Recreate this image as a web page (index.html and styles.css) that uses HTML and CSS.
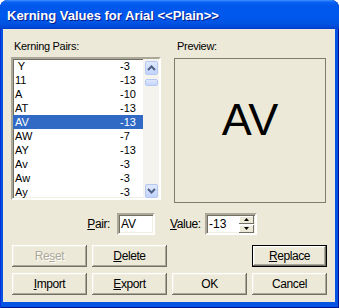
FILE: index.html
```html
<!DOCTYPE html>
<html lang="en">
<head>
    <meta charset="UTF-8">
    <title>Kerning Values for Arial</title>
    <link rel="stylesheet" href="styles.css">
</head>
<body>
    <div class="window">
        <div class="titlebar">
            <span class="title">Kerning Values for Arial &lt;&lt;Plain&gt;&gt;</span>
        </div>

        <div class="client">
            <div class="panes">
                <div class="pane pane-list">
                    <div class="label">Kerning Pairs:</div>
                    <div class="listbox">
                        <ul class="rows">
                            <li><span class="pair"> Y</span><span class="val">-3</span></li>
                            <li><span class="pair">11</span><span class="val">-13</span></li>
                            <li><span class="pair">A</span><span class="val">-10</span></li>
                            <li><span class="pair">AT</span><span class="val">-13</span></li>
                            <li class="selected"><span class="pair">AV</span><span class="val">-13</span></li>
                            <li><span class="pair">AW</span><span class="val">-7</span></li>
                            <li><span class="pair">AY</span><span class="val">-13</span></li>
                            <li><span class="pair">Av</span><span class="val">-3</span></li>
                            <li><span class="pair">Aw</span><span class="val">-3</span></li>
                            <li><span class="pair">Ay</span><span class="val">-3</span></li>
                        </ul>
                        <div class="scrollbar">
                            <div class="sb-btn">
                                <svg width="9" height="6" viewBox="0 0 9 6"><polyline points="1,5 4.5,1.5 8,5" fill="none" stroke="#4d6185" stroke-width="2"/></svg>
                            </div>
                            <div class="sb-thumb"></div>
                            <div class="sb-track"></div>
                            <div class="sb-btn">
                                <svg width="9" height="6" viewBox="0 0 9 6"><polyline points="1,1 4.5,4.5 8,1" fill="none" stroke="#4d6185" stroke-width="2"/></svg>
                            </div>
                        </div>
                    </div>
                </div>

                <div class="pane pane-preview">
                    <div class="label">Preview:</div>
                    <div class="preview"><span>AV</span></div>
                </div>
            </div>

            <div class="fields">
                <span class="field-label label-pair"><u>P</u>air:</span>
                <div class="textbox box-pair"><span>AV</span></div>
                <span class="field-label label-value"><u>V</u>alue:</span>
                <div class="textbox box-value">
                    <span>-13</span>
                    <div class="spin">
                        <div class="spin-btn"><svg width="5" height="3" viewBox="0 0 5 3"><polygon points="0,3 2.5,0 5,3" fill="#000"/></svg></div>
                        <div class="spin-btn"><svg width="5" height="3" viewBox="0 0 5 3"><polygon points="0,0 2.5,3 5,0" fill="#000"/></svg></div>
                    </div>
                </div>
            </div>

            <div class="buttons">
                <button class="btn" disabled>Re<u>s</u>et</button>
                <button class="btn"><u>D</u>elete</button>
                <span></span>
                <button class="btn btn-default"><u>R</u>eplace</button>
                <button class="btn"><u>I</u>mport</button>
                <button class="btn"><u>E</u>xport</button>
                <button class="btn">OK</button>
                <button class="btn">Cancel</button>
            </div>
        </div>
    </div>
</body>
</html>
```

FILE: styles.css
```css
body {
    margin: 0;
    padding: 0;
    background-color: #fff;
    font-family: "Liberation Sans", Arial, sans-serif;
    font-size: 11px;
}
.window {
    width: 339px;
    height: 308px;
    box-sizing: border-box;
    display: flex;
    flex-direction: column;
    background-color: #0553e2;
    border-radius: 8px 8px 0 0;
    padding: 0 4px 6px 3px;
    box-shadow: inset 1px 0 #0831d9, inset -1px 0 #00138c, inset 0 -1px #00138c;
}
.titlebar {
    height: 29px;
    margin: 0 -4px 0 -3px;
    border-radius: 8px 8px 0 0;
    background: linear-gradient(#3d95ff 0, #0a63f4 2px, #0057ea 6px, #0058ee 16px, #0054e3 23px, #0049d8 27px, #003cc8 29px);
    display: flex;
    align-items: center;
    padding-left: 7px;
}
.title {
    color: #fff;
    font-weight: bold;
    font-size: 13px;
    text-shadow: 1px 1px #0a1a8a;
    margin-top: 1px;
}
.client {
    flex: 1;
    background-color: #ece9d8;
    padding-top: 11px;
}

/* top panes */
.panes {
    display: flex;
    gap: 13px;
    padding-left: 8px;
    height: 163px;
}
.label {
    line-height: 13px;
    padding-left: 3px;
    color: #000;
    letter-spacing: -0.3px;
}
.listbox {
    margin-top: 4px;
    width: 150px;
    height: 143px;
    box-sizing: border-box;
    border: 2px solid;
    border-color: #aca899 #fff #fff #aca899;
    box-shadow: inset 1px 1px #716f64, inset -1px -1px #f1efe2;
    background: #fff;
    display: flex;
    overflow: hidden;
}
.rows {
    list-style: none;
    margin: 0;
    padding: 0;
    flex: 1;
}
.rows li {
    height: 14px;
    line-height: 14px;
    display: flex;
    padding-left: 2px;
}
.rows li.selected {
    background-color: #316ac5;
    color: #fff;
}
.pair {
    width: 105px;
    white-space: pre;
}
.scrollbar {
    width: 16px;
    background-color: #f4f3ee;
    display: flex;
    flex-direction: column;
    align-items: center;
    padding-top: 2px;
}
.sb-btn {
    width: 13px;
    height: 14px;
    box-sizing: border-box;
    border: 1px solid #b5c8f3;
    border-radius: 2px;
    background: linear-gradient(#dfe8fd, #c2d3fb);
    display: flex;
    align-items: center;
    justify-content: center;
}
.sb-thumb {
    width: 13px;
    height: 7px;
    box-sizing: border-box;
    margin-top: 4px;
    border: 1px solid #b5c8f3;
    border-radius: 2px;
    background: linear-gradient(#dfe8fd, #c6d5fb);
}
.sb-track {
    flex: 1;
}
.preview {
    margin-top: 5px;
    width: 152px;
    height: 145px;
    box-sizing: border-box;
    border: 1px solid #7f7c6e;
    text-align: center;
    padding-top: 35px;
    font-size: 45px;
    line-height: 52px;
    color: #000;
}

/* pair / value fields */
.fields {
    display: flex;
    align-items: center;
    margin-top: 10px;
    height: 22px;
}
.field-label {
    line-height: 13px;
    font-size: 12px;
    letter-spacing: -0.4px;
}
.label-pair {
    width: 107px;
    text-align: right;
}
.label-value {
    width: 28px;
    margin-left: 15px;
}
.textbox {
    margin-left: 7px;
    height: 22px;
    box-sizing: border-box;
    border: 2px solid;
    border-color: #aca899 #fff #fff #aca899;
    box-shadow: inset 1px 1px #716f64, inset -1px -1px #f1efe2;
    background: #fff;
    display: flex;
    align-items: center;
    padding-left: 2px;
    font-size: 12px;
}
.box-pair {
    width: 38px;
}
.box-value {
    width: 52px;
    justify-content: space-between;
    padding-right: 1px;
}
.spin {
    width: 15px;
    height: 17px;
    display: flex;
    flex-direction: column;
    gap: 1px;
}
.spin-btn {
    flex: 1;
    background: #ece9d8;
    box-shadow: inset -1px -1px #716f64, inset 1px 1px #fff;
    display: flex;
    align-items: center;
    justify-content: center;
}

/* buttons */
.buttons {
    display: grid;
    grid-template-columns: 75px 75px 75px 75px;
    grid-auto-rows: 22px;
    column-gap: 5px;
    row-gap: 6px;
    padding-left: 9px;
    margin-top: 10px;
}
.buttons > span {
    grid-column: 3;
}
.btn {
    font-family: "Liberation Sans", Arial, sans-serif;
    font-size: 12px;
    letter-spacing: -0.4px;
    color: #000;
    background: #ece9d8;
    border: none;
    padding: 0;
    margin: 0;
    box-shadow: inset -1px -1px #716f64, inset 1px 1px #fff, inset -2px -2px #aca899, inset 2px 2px #f1efe2;
}
.btn:disabled {
    color: #aca899;
    text-shadow: 1px 1px #fff;
}
.btn-default {
    grid-column: 4;
    border: 1px solid #000;
}
```
